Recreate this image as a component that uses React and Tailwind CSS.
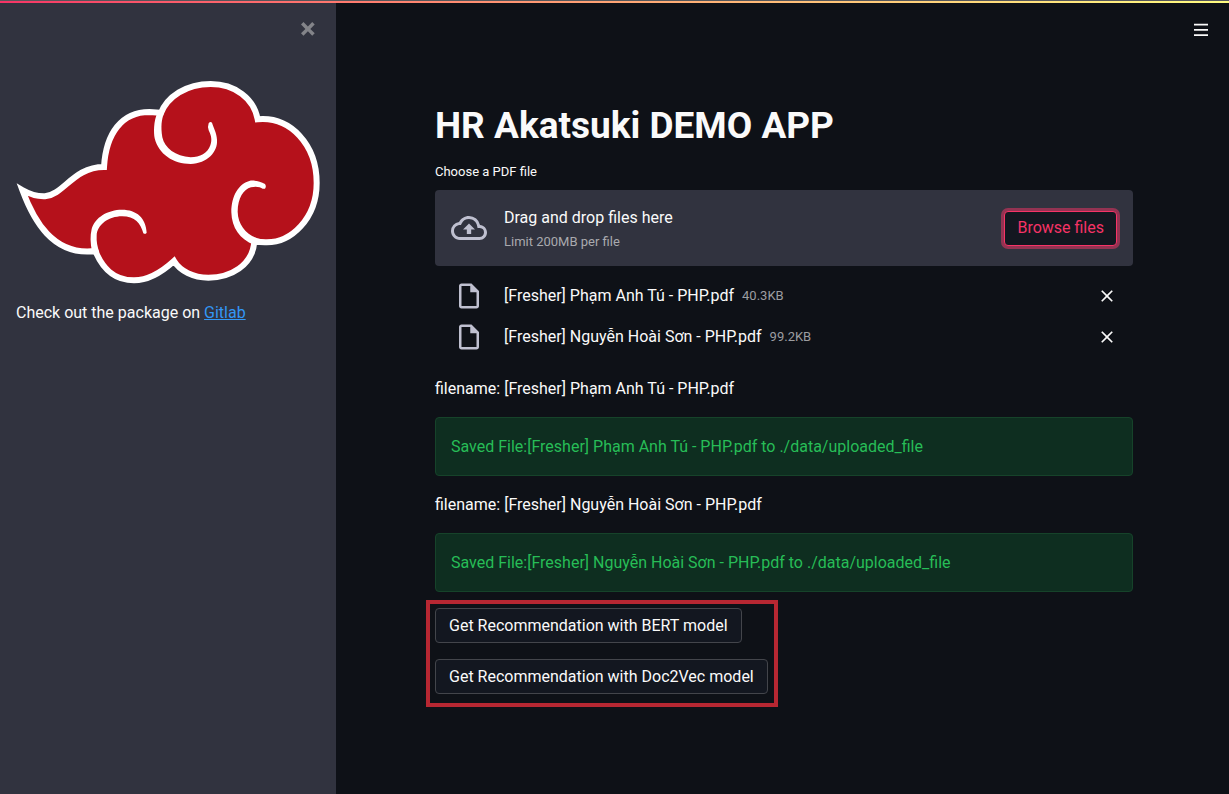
const files = [
  { name: '[Fresher] Phạm Anh Tú - PHP.pdf', size: '40.3KB' },
  { name: '[Fresher] Nguyễn Hoài Sơn - PHP.pdf', size: '99.2KB' },
];

const models = ['BERT', 'Doc2Vec'];

function CloudLogo() {
  return (
    <svg viewBox="48 31 912 612" className="block w-full" role="img" aria-label="Akatsuki cloud">
      <path
        d="M481 134C501 80 560 43 632 43C704 43 762 86 773 149C872 140 950 226 950 340C950 446 874 521 795 518L763 516C757 588 692 624 625 624C580 624 540 604 522 574C478 614 442 632 402 632C338 632 306 592 286 544C158 560 100 450 67 361C90 374 112 381 135 380C193 374 220 292 312 292C318 190 366 127 448 127L480 129"
        fill="#b5111b"
        stroke="#ffffff"
        strokeWidth="18"
        strokeMiterlimit="6"
      />
      <g fill="#ffffff">
        <path d="M473 128C460 155 461 190 464 206C476 254 520 283 572 283C622 281 654 246 651 210C650 190 641 175 636 159Q631 154 626 161Q622 172 626 182C635 200 636 212 631 227C623 251 600 263 572 263C526 260 494 235 487 203C482 170 485 150 491 134Z" />
        <path d="M795 357Q800 350 795 343C781 335 764 332 750 333C716 342 694 378 694 428C695 474 720 510 762 525L797 511C750 506 714 474 713 426C713 386 731 358 753 353C768 349 781 352 788 357Z" />
        <path d="M276 546C271 520 270 498 275 478C284 443 324 420 366 420C410 420 438 445 440 489Q436 495 430 491C422 461 405 440 366 440C326 440 291 465 290 498C289 515 292 530 298 548Z" />
      </g>
    </svg>
  );
}

function CloudUploadIcon() {
  return (
    <svg viewBox="0 0 24 24" className="size-9 shrink-0" fill="currentColor" aria-hidden="true">
      <path d="M19.35 10.04A7.49 7.49 0 0 0 12 4C9.11 4 6.6 5.64 5.35 8.04A5.994 5.994 0 0 0 0 14c0 3.31 2.69 6 6 6h13c2.76 0 5-2.24 5-5 0-2.64-2.05-4.78-4.65-4.96zM19 18H6c-2.21 0-4-1.79-4-4 0-2.05 1.53-3.76 3.56-3.97l1.07-.11.5-.95A5.469 5.469 0 0 1 12 6c2.62 0 4.88 1.86 5.39 4.43l.3 1.5 1.53.11A2.98 2.98 0 0 1 22 15c0 1.65-1.35 3-3 3zM8 13h2.55v3h2.9v-3H16l-4-4z" />
    </svg>
  );
}

function FileIcon() {
  return (
    <svg viewBox="0 0 24 24" className="size-[30px]" fill="currentColor" aria-hidden="true">
      <path d="M14 2H6c-1.1 0-1.99.9-1.99 2L4 20c0 1.1.89 2 1.99 2H18c1.1 0 2-.9 2-2V8l-6-6zM6 20V4h7v5h5v11H6z" />
    </svg>
  );
}

function ClearIcon() {
  return (
    <svg viewBox="0 0 24 24" className="size-5" fill="currentColor" aria-hidden="true">
      <path d="M19 6.41L17.59 5 12 10.59 6.41 5 5 6.41 10.59 12 5 17.59 6.41 19 12 13.41 17.59 19 19 17.59 13.41 12z" />
    </svg>
  );
}

function Sidebar() {
  return (
    <aside className="w-[336px] shrink-0 bg-[#31333f] px-4">
      <div className="flex h-[77px] items-start justify-end pt-[19px] pr-[5px]">
        <button type="button" aria-label="Close sidebar" className="text-[#838489]">
          <svg viewBox="0 0 8 8" className="size-[14px]" fill="currentColor" aria-hidden="true">
            <path d="M1.41 0l-1.41 1.41.72.72 1.78 1.81-1.78 1.78-.72.69 1.41 1.44.72-.72 1.81-1.81 1.78 1.81.69.72 1.44-1.44-.72-.69-1.81-1.78 1.81-1.81.72-.72-1.44-1.41-.69.72-1.78 1.78-1.81-1.78-.72-.72z" />
          </svg>
        </button>
      </div>
      <CloudLogo />
      <p className="mt-[17px] leading-6">
        Check out the package on{' '}
        <a href="#gitlab" className="text-[#3397f5] underline">
          Gitlab
        </a>
      </p>
    </aside>
  );
}

function Uploader() {
  return (
    <section>
      <label htmlFor="browse" className="block text-[13px] leading-5">
        Choose a PDF file
      </label>
      <div className="mt-2 flex items-center rounded bg-[#31333f] px-4 py-3">
        <span className="text-[#bfc0d0]">
          <CloudUploadIcon />
        </span>
        <div className="ml-[17px] flex-1 pt-1">
          <p className="leading-6">Drag and drop files here</p>
          <p className="text-[13px] leading-6 text-[#a9aaae]">Limit 200MB per file</p>
        </div>
        <button
          id="browse"
          type="button"
          className="h-[35px] rounded border border-[#f63366] bg-[#131720] px-3 text-[#f63366] ring-3 ring-[#f63366]/50"
        >
          Browse files
        </button>
      </div>
      <ul className="mt-[9px] pr-4 pl-[19px]">
        {files.map((file) => (
          <li key={file.name} className="flex h-[41px] items-center">
            <span className="text-[#bfc0d0]">
              <FileIcon />
            </span>
            <span className="ml-5">{file.name}</span>
            <span className="ml-2 flex-1 text-[13px] text-[#9c9da0]">{file.size}</span>
            <button type="button" aria-label={'Remove ' + file.name}>
              <ClearIcon />
            </button>
          </li>
        ))}
      </ul>
    </section>
  );
}

export default function App() {
  return (
    <div className="flex min-h-screen flex-col bg-[#0e1117] font-['Roboto','Noto_Sans',sans-serif] text-base text-[#fafafa]">
      <div className="h-[3px] border-t border-[#55575b] bg-linear-to-r from-[#f63366] to-[#fffd80]" />
      <div className="flex flex-1">
        <Sidebar />
        <div className="min-w-0 flex-1">
          <header className="flex justify-end pt-[19px] pr-[21px]">
            <button type="button" aria-label="Menu">
              <svg viewBox="0 0 8 8" className="size-[14px]" fill="currentColor" aria-hidden="true">
                <path d="M0 .98v1h8v-1h-8zm0 3v1h8v-1h-8zm0 3v1h8v-1h-8z" />
              </svg>
            </button>
          </header>
          <main className="mx-auto mt-[67px] max-w-[733px] pr-4 pl-[19px]">
            <h1 className="text-[37px] leading-[46px] font-bold">HR Akatsuki DEMO APP</h1>
            <div className="mt-[13px] mb-[3px]">
              <Uploader />
            </div>
            {files.map((file) => (
              <div key={file.name} className="pt-4">
                <p className="leading-[26px]">filename: {file.name}</p>
                <div
                  role="status"
                  className="mt-[15px] flex h-[59px] items-center rounded border border-[#16432a] bg-[#0e2e20] px-[15px] text-[#27bd57]"
                >
                  Saved File:{file.name} to ./data/uploaded_file
                </div>
              </div>
            ))}
            <div className="mt-2 -ml-[9px] flex w-fit flex-col items-start gap-4 border-4 border-[#b72732] pt-1 pr-[6px] pb-[9px] pl-[5px]">
              {models.map((model) => (
                <button
                  key={model}
                  type="button"
                  className="h-[35px] rounded border border-[#43454b] bg-[#131720] px-[13px]"
                >
                  Get Recommendation with {model} model
                </button>
              ))}
            </div>
          </main>
        </div>
      </div>
    </div>
  );
}
